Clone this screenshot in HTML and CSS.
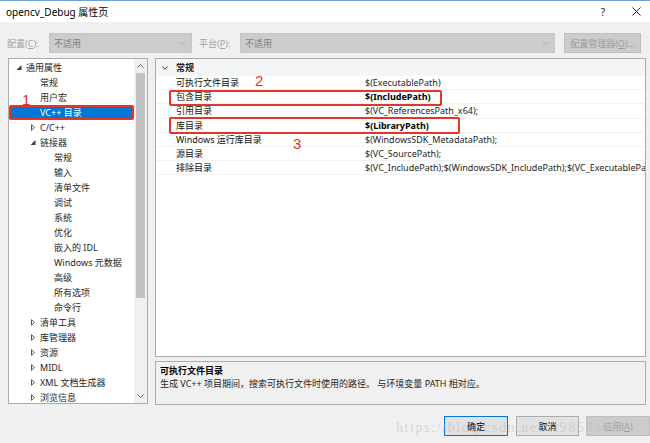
FILE: index.html
```html
<!DOCTYPE html>
<html lang="zh-CN">
<head>
    <meta charset="UTF-8">
    <title>opencv_Debug 属性页</title>
    <link rel="stylesheet" href="styles.css">
</head>
<body>
<div class="window">
    <div class="titlebar">
        <span class="title">opencv_Debug 属性页</span>
        <span class="title-btns">
            <span class="help">?</span>
            <svg class="close" width="9" height="9" viewBox="0 0 9 9"><path d="M0.5 0.5L8.5 8.5M8.5 0.5L0.5 8.5" stroke="#222" stroke-width="1"/></svg>
        </span>
    </div>

    <div class="toolbar">
        <span class="tb-label">配置(<u>C</u>):</span>
        <div class="combo combo-config">
            <span>不适用</span>
            <svg width="7" height="4" viewBox="0 0 7 4"><path d="M0.5 0.5L3.5 3.5L6.5 0.5" fill="none" stroke="#b0b0b0"/></svg>
        </div>
        <span class="tb-label tb-label-platform">平台(<u>P</u>):</span>
        <div class="combo combo-platform">
            <span>不适用</span>
            <svg width="7" height="4" viewBox="0 0 7 4"><path d="M0.5 0.5L3.5 3.5L6.5 0.5" fill="none" stroke="#b0b0b0"/></svg>
        </div>
        <button class="tb-btn">配置管理器(<u>O</u>)...</button>
    </div>

    <div class="main">
        <div class="tree">
            <ul class="tree-list">
                <li class="lvl0"><span class="tg"><span class="tri-open"></span></span>通用属性</li>
                <li class="lvl1"><span class="tg"></span>常规</li>
                <li class="lvl1"><span class="tg"></span>用户宏</li>
                <li class="lvl1 selected"><span class="tg"></span>VC++ 目录</li>
                <li class="lvl1"><span class="tg"><svg width="4" height="7" viewBox="0 0 4 7"><path d="M0.5 0.7L3.4 3.5L0.5 6.3Z" fill="none" stroke="#555"/></svg></span>C/C++</li>
                <li class="lvl1"><span class="tg"><span class="tri-open"></span></span>链接器</li>
                <li class="lvl2"><span class="tg"></span>常规</li>
                <li class="lvl2"><span class="tg"></span>输入</li>
                <li class="lvl2"><span class="tg"></span>清单文件</li>
                <li class="lvl2"><span class="tg"></span>调试</li>
                <li class="lvl2"><span class="tg"></span>系统</li>
                <li class="lvl2"><span class="tg"></span>优化</li>
                <li class="lvl2"><span class="tg"></span>嵌入的 IDL</li>
                <li class="lvl2"><span class="tg"></span>Windows 元数据</li>
                <li class="lvl2"><span class="tg"></span>高级</li>
                <li class="lvl2"><span class="tg"></span>所有选项</li>
                <li class="lvl2"><span class="tg"></span>命令行</li>
                <li class="lvl1"><span class="tg"><svg width="4" height="7" viewBox="0 0 4 7"><path d="M0.5 0.7L3.4 3.5L0.5 6.3Z" fill="none" stroke="#555"/></svg></span>清单工具</li>
                <li class="lvl1"><span class="tg"><svg width="4" height="7" viewBox="0 0 4 7"><path d="M0.5 0.7L3.4 3.5L0.5 6.3Z" fill="none" stroke="#555"/></svg></span>库管理器</li>
                <li class="lvl1"><span class="tg"><svg width="4" height="7" viewBox="0 0 4 7"><path d="M0.5 0.7L3.4 3.5L0.5 6.3Z" fill="none" stroke="#555"/></svg></span>资源</li>
                <li class="lvl1"><span class="tg"><svg width="4" height="7" viewBox="0 0 4 7"><path d="M0.5 0.7L3.4 3.5L0.5 6.3Z" fill="none" stroke="#555"/></svg></span>MIDL</li>
                <li class="lvl1"><span class="tg"><svg width="4" height="7" viewBox="0 0 4 7"><path d="M0.5 0.7L3.4 3.5L0.5 6.3Z" fill="none" stroke="#555"/></svg></span>XML 文档生成器</li>
                <li class="lvl1"><span class="tg"><svg width="4" height="7" viewBox="0 0 4 7"><path d="M0.5 0.7L3.4 3.5L0.5 6.3Z" fill="none" stroke="#555"/></svg></span>浏览信息</li>
            </ul>
            <div class="scrollbar">
                <div class="sb-arrow">
                    <svg width="7" height="4" viewBox="0 0 7 4"><path d="M0.5 3.5L3.5 0.5L6.5 3.5" fill="none" stroke="#606060"/></svg>
                </div>
                <div class="sb-track"><div class="sb-thumb"></div></div>
                <div class="sb-arrow">
                    <svg width="7" height="4" viewBox="0 0 7 4"><path d="M0.5 0.5L3.5 3.5L6.5 0.5" fill="none" stroke="#606060"/></svg>
                </div>
            </div>
            <span class="mark mark-1">1</span>
        </div>

        <div class="right">
            <div class="grid">
                <div class="grid-head">
                    <svg class="head-chev" width="6" height="4" viewBox="0 0 6 4"><path d="M0.5 0.5L3 3.2L5.5 0.5" fill="none" stroke="#333"/></svg>
                    常规
                </div>
                <div class="grid-row"><span class="name">可执行文件目录</span><span class="value">$(ExecutablePath)</span></div>
                <div class="grid-row"><span class="name">包含目录</span><span class="value strong">$(IncludePath)</span></div>
                <div class="grid-row"><span class="name">引用目录</span><span class="value">$(VC_ReferencesPath_x64);</span></div>
                <div class="grid-row"><span class="name">库目录</span><span class="value strong">$(LibraryPath)</span></div>
                <div class="grid-row"><span class="name">Windows 运行库目录</span><span class="value">$(WindowsSDK_MetadataPath);</span></div>
                <div class="grid-row"><span class="name">源目录</span><span class="value">$(VC_SourcePath);</span></div>
                <div class="grid-row"><span class="name">排除目录</span><span class="value">$(VC_IncludePath);$(WindowsSDK_IncludePath);$(VC_ExecutablePath_x64);</span></div>

                <div class="redbox box-include"></div>
                <div class="redbox box-library"></div>
                <span class="mark mark-2">2</span>
                <span class="mark mark-3">3</span>
            </div>
            <div class="desc">
                <div class="desc-title">可执行文件目录</div>
                <div class="desc-text">生成 VC++ 项目期间，搜索可执行文件时使用的路径。 与环境变量 PATH 相对应。</div>
            </div>
        </div>
    </div>

    <div class="buttons">
        <button class="btn btn-default">确定</button>
        <button class="btn btn-cancel">取消</button>
        <button class="btn btn-disabled">应用(<u>A</u>)</button>
    </div>

    <div class="watermark">https://blog.csdn.net/tt9860400</div>
</div>
</body>
</html>
```

FILE: styles.css
```css
* {
    box-sizing: border-box;
}

body {
    margin: 0;
    width: 650px;
    height: 443px;
    overflow: hidden;
    background-color: #f0f0f0;
    font-family: "Noto Sans", "Noto Sans CJK SC", sans-serif;
    font-size: 9px;
    color: #1e1e1e;
}

.window {
    position: relative;
    height: 443px;
}

/* title bar */
.titlebar {
    height: 22px;
    background-color: #fff;
    border-top: 1px solid #6f9fd4;
    display: flex;
    align-items: center;
    justify-content: space-between;
    padding: 0 9px 0 6px;
}

.title {
    font-size: 10px;
    color: #000;
}

.title-btns {
    display: flex;
    align-items: center;
    gap: 27px;
}

.help {
    font-size: 10px;
    color: #222;
}

/* configuration row */
.toolbar {
    display: flex;
    align-items: center;
    height: 20px;
    margin-top: 11px;
    padding-left: 7px;
    color: #a3a3a3;
}

.tb-label {
    width: 42px;
}

.tb-label-platform {
    margin-left: 7px;
    width: 41px;
}

.combo {
    height: 20px;
    background-color: #cccccc;
    border: 1px solid #c6c6c6;
    display: flex;
    align-items: center;
    justify-content: space-between;
    padding: 0 5px 0 4px;
    color: #7f7f7f;
}

.combo-config {
    width: 143px;
}

.combo-platform {
    width: 315px;
}

.tb-btn {
    margin-left: 9px;
    width: 77px;
    height: 20px;
    padding: 0;
    background-color: #cccccc;
    border: 1px solid #bfbfbf;
    color: #9d9d9d;
    font: inherit;
}

/* main area */
.main {
    display: flex;
    align-items: flex-start;
    gap: 7px;
    margin-top: 5px;
    padding-left: 8px;
    height: 347px;
}

.tree {
    position: relative;
    display: flex;
    width: 140px;
    height: 346px;
    background-color: #fff;
    border: 1px solid #acacac;
    overflow: hidden;
}

.tree-list {
    list-style: none;
    margin: 0;
    padding: 1px 0 0;
    width: 125px;
    flex-shrink: 0;
}

.tree-list li {
    height: 15px;
    display: flex;
    align-items: center;
    white-space: nowrap;
    color: #1e1e1e;
}

.tg {
    width: 10px;
    margin-right: 2px;
    display: flex;
    align-items: center;
    justify-content: center;
    flex-shrink: 0;
}

.tri-open {
    width: 5px;
    height: 5px;
    background-color: #3c3c3c;
    clip-path: polygon(100% 0, 100% 100%, 0 100%);
}

.lvl0 {
    padding-left: 5px;
}

.lvl1 {
    padding-left: 19px;
}

.lvl2 {
    padding-left: 33px;
}

.tree-list li.selected {
    background-color: #0078d7;
    color: #fff;
    border: 2px solid #e5352b;
    border-radius: 2px;
    padding-left: 17px;
}

.scrollbar {
    width: 13px;
    display: flex;
    flex-direction: column;
    background-color: #f0f0f0;
}

.sb-arrow {
    height: 14px;
    display: flex;
    align-items: center;
    justify-content: center;
}

.sb-track {
    flex: 1;
    padding: 0 2px;
}

.sb-thumb {
    height: 225px;
    background-color: #c2c2c2;
}

/* annotations */
.mark {
    position: absolute;
    font-family: "Liberation Sans", sans-serif;
    font-size: 15px;
    line-height: 15px;
    color: #e5352b;
}

.mark-1 {
    left: 13px;
    top: 33px;
}

.mark-2 {
    left: 99px;
    top: 14px;
}

.mark-3 {
    left: 137px;
    top: 77px;
}

.redbox {
    position: absolute;
    border: 2px solid #e5352b;
    border-radius: 2px;
}

.box-include {
    left: 13px;
    top: 31px;
    width: 273px;
    height: 16px;
}

.box-library {
    left: 13px;
    top: 58px;
    width: 291px;
    height: 17px;
}

/* property grid */
.right {
    width: 491px;
    display: flex;
    flex-direction: column;
    gap: 4px;
}

.grid {
    position: relative;
    height: 299px;
    background-color: #fff;
    border: 1px solid #acacac;
    overflow: hidden;
}

.grid-head {
    height: 17px;
    display: flex;
    align-items: center;
    padding-left: 6px;
    background-color: #f4f5f7;
    font-weight: bold;
    color: #1e1e1e;
}

.head-chev {
    margin-right: 8px;
}

.grid-row {
    height: 14.2px;
    display: flex;
    align-items: center;
    border-bottom: 1px solid #f2f2f2;
    white-space: nowrap;
}

.name {
    width: 209px;
    flex-shrink: 0;
    padding-left: 20px;
    color: #111;
}

.value {
    color: #1e1e1e;
}

.value.strong {
    font-weight: bold;
    color: #000;
}

/* description */
.desc {
    height: 44px;
    background-color: #f0f0f0;
    border: 1px solid #acacac;
    padding: 2px 4px;
}

.desc-title {
    font-weight: bold;
    color: #000;
    line-height: 13px;
}

.desc-text {
    line-height: 13px;
}

/* dialog buttons */
.buttons {
    display: flex;
    margin-top: 11px;
    padding-left: 444px;
}

.btn {
    flex-shrink: 0;
    width: 64px;
    height: 20px;
    padding: 0;
    font: inherit;
    color: #000;
    background-color: #e1e1e1;
    border: 1px solid #adadad;
}

.btn-default {
    border-color: #0078d7;
}

.btn-cancel {
    margin-left: 8px;
    width: 63px;
}

.btn-disabled {
    margin-left: 7px;
    background-color: #cccccc;
    border-color: #bfbfbf;
    color: #a0a0a0;
}

.watermark {
    position: absolute;
    left: 396px;
    top: 420px;
    font-family: "Liberation Serif", serif;
    font-size: 14px;
    letter-spacing: 1.6px;
    color: rgba(190, 190, 190, 0.55);
    white-space: nowrap;
    pointer-events: none;
}
```
